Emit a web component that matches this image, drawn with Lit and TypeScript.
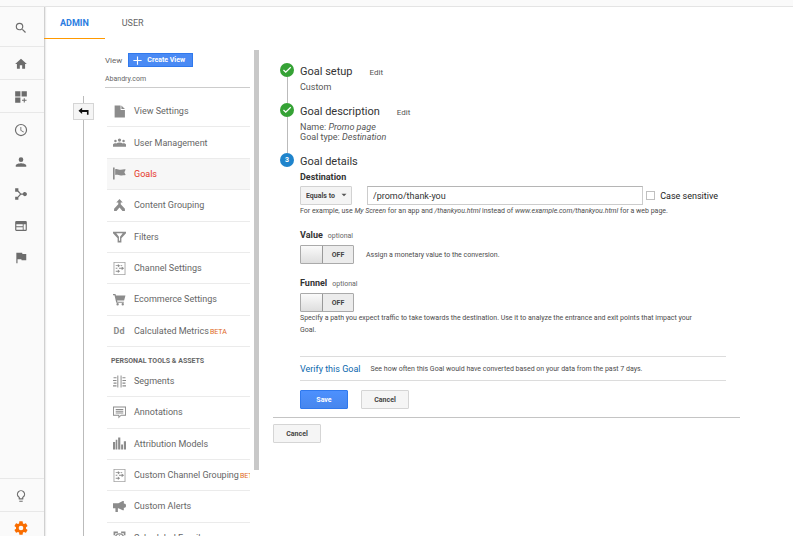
import { LitElement, html, css, svg, nothing } from "lit";
import { customElement, property, state } from "lit/decorators.js";
import { classMap } from "lit/directives/class-map.js";

const icons: Record<string, unknown> = {
  search: svg`<path d="M15.5 14h-.79l-.28-.27A6.47 6.47 0 0 0 16 9.5 6.5 6.5 0 1 0 9.5 16c1.61 0 3.09-.59 4.23-1.57l.27.28v.79l5 4.99L20.49 19zm-6 0A4.5 4.5 0 1 1 9.5 5a4.5 4.5 0 0 1 0 9z"/>`,
  home: svg`<path d="M10 20v-6h4v6h5v-8h3L12 3 2 12h3v8z"/>`,
  dashboard: svg`<path d="M2 2h9v9H2zM13 2h9v9h-9zM2 13h9v9H2zM16.700 14h1.800v2.700h3v1.800h-3v3h-1.800v-3h-3v-1.800h3z"/>`,
  clock: svg`<path d="M12 1.500a10.500 10.500 0 1 0 0 21 10.500 10.500 0 0 0 0-21zm0 19a8.500 8.500 0 1 1 0-17 8.500 8.500 0 0 1 0 17zM12.500 7H11v6l5.250 3.150.75-1.230-4.500-2.670z"/>`,
  person: svg`<path d="M12 12a4 4 0 1 0 0-8 4 4 0 0 0 0 8zm0 2c-2.670 0-9 1.340-9 4v2h18v-2c0-2.660-6.330-4-9-4z"/>`,
  paths: svg`<path d="M2 2h5.500v4.200L12 11h3.200a3.600 3.600 0 1 1 0 2.400H12l-4.500 4.600V22H2v-5.500h4.200l4-4.300-4-4.200H2z"/>`,
  web: svg`<path d="M20 3.500H4a2 2 0 0 0-2 2v13c0 1.100.9 2 2 2h16a2 2 0 0 0 2-2v-13a2 2 0 0 0-2-2zm-5 15H4V14h11zm0-6H4V9h11zm5 6h-3.500V9H20z"/>`,
  flag: svg`<path d="M14.400 5 14 3H4v18h2v-7h6.600l.4 2h8V5z"/>`,
  bulb: svg`<path d="M9 21c0 .55.45 1 1 1h4c.55 0 1-.45 1-1v-1H9zm3-19a7 7 0 0 0-4 12.740V17c0 .55.45 1 1 1h6c.55 0 1-.45 1-1v-2.260A7 7 0 0 0 12 2zm2.850 11.100-.85.6V16h-4v-2.300l-.85-.6a5 5 0 1 1 5.700 0z"/>`,
  gear: svg`<path d="M19.430 12.980c.04-.32.07-.64.07-.98s-.03-.66-.07-.98l2.110-1.650c.19-.15.24-.42.12-.64l-2-3.460c-.12-.22-.39-.3-.61-.22l-2.490 1c-.52-.4-1.080-.73-1.690-.98l-.38-2.650A.49.49 0 0 0 14 2h-4c-.25 0-.46.18-.49.42l-.38 2.650c-.61.25-1.170.59-1.690.98l-2.490-1c-.23-.09-.49 0-.61.22l-2 3.460c-.13.22-.07.49.12.64l2.110 1.650c-.04.32-.07.65-.07.98s.03.66.07.98l-2.110 1.650c-.19.15-.24.42-.12.64l2 3.460c.12.22.39.3.61.22l2.490-1c.52.4 1.080.73 1.690.98l.38 2.650c.03.24.24.42.49.42h4c.25 0 .46-.18.49-.42l.38-2.650c.61-.25 1.170-.59 1.690-.98l2.490 1c.23.09.49 0 .61-.22l2-3.460c.12-.22.07-.49-.12-.64zM12 15.500a3.500 3.500 0 1 1 0-7 3.500 3.500 0 0 1 0 7z"/>`,
  page: svg`<path d="M3 1h11v8h8v14H3z"/><path d="M15.500 1 22 7.500h-6.500z"/>`,
  people: svg`<path d="M12 4.500a3 3 0 1 0 0 6 3 3 0 0 0 0-6zM4.500 7a2.300 2.300 0 1 0 0 4.600 2.300 2.300 0 0 0 0-4.600zm15 0a2.300 2.300 0 1 0 0 4.600 2.300 2.300 0 0 0 0-4.600zM0 20v-4c0-1.500 3-2.800 6-2.300 1.500-1.300 3.500-1.800 6-1.800s4.500.5 6 1.800c3-.5 6 .8 6 2.300v4z"/>`,
  banner: svg`<path d="M0 1h3v22H0zM4 4c4-1.600 7 1.600 10.400 1 3-.5 5.500-1 9-.6L21 9.500l2.400 5.100c-4 .3-6 .9-9 1-3.500 0-6.400-1.800-10.400-.8z"/>`,
  merge: svg`<path d="M12 0l6 6.500h-3.700V9.500L22 18v4h-4.500L12 15.500 6.500 22H2v-4l7.700-8.500v-3H6z"/>`,
  funnel: svg`<path fill-rule="evenodd" d="M0 3h24v2.800L15.500 15v8h-7v-8L0 5.800zm6 3 5 6.500v7.500h2v-7.500L18 6z"/>`,
  channels: svg`<path opacity=".8" fill-rule="evenodd" d="M1 0h22v24H1zm1.600 1.600v20.800h18.800V1.600z"/><path d="M5 5.800h4V3.500L13 6.700 9 10V7.600H5zM14 5.800h3v1.800h-3zM11 10.800h5V8.500l4.500 3.200L16 15v-2.400h-5zM5 10.800h3v1.800H5zM5 16.300h4V14l4 3.200L9 20.500v-2.400H5z"/>`,
  cart: svg`<path d="M0 2h4.500l1 2.500H23L20.500 14H7.500l.7 2H20v2.200H6L2.800 4.200H0zM8.500 18.500a2.200 2.200 0 1 1 0 4.400 2.200 2.200 0 0 1 0-4.400zm9.500 0a2.200 2.200 0 1 1 0 4.400 2.200 2.200 0 0 1 0-4.400z"/>`,
  segments: svg`<path d="M8 1h1.800v22H8zM14 1h1.800v22H14zM1 4h5.500v2H1zM0 9h6.500v2H0zM1 14h5.500v2H1zM0 19h6.500v2H0zM17.500 4H23v2h-5.500zM17.500 9H24v2h-6.500zM17.500 14H23v2h-5.500zM17.500 19H24v2h-6.500z"/>`,
  note: svg`<path fill-rule="evenodd" d="M0 1h24v17h-9l-5 5v-5H0zm1.700 1.700v13.600h10v3l3-3h7.600V2.700zM5 5.500h14v1.800H5zM5 8.700h14v1.800H5zM5 11.900h14v1.800H5z"/>`,
  bars: svg`<path d="M0 9h4v14H0zM5 5h3v18H5zM9.500 1h4v22h-4zM15 14h3.500v9H15zM20 8h4v15h-4z"/>`,
  horn: svg`<path d="M0 6h10l8-4h2v4.500c3 0 4 1.500 4 4s-1 4-4 4V19h-2l-8-4H9v7H4.500v-7H0z"/>`,
  alarm: svg`<path fill-rule="evenodd" d="M1 1h8v3H4v4H1zm14 0h8v7h-3V4h-5zM12 4a9 9 0 1 1 0 18 9 9 0 0 1 0-18zm0 2.500a6.500 6.500 0 1 0 0 13 6.500 6.500 0 0 0 0-13zM11 8h1.800v4.500l3 2-1 1.500-3.800-2.500z"/>`,
  back: svg`<path d="M1 10.500 9 4v4.500h14V19h-3.500v-6H9v4.500z"/>`,
  plus: svg`<path d="M10.500 1h3v9.500H23v3h-9.500V23h-3v-9.500H1v-3h9.500z"/>`,
  check: svg`<path d="M9 15.200 20 4.200l2 2.200L9 19.400l-6.500-6.500 2-2.200z"/>`,
  caret: svg`<path d="M2 7h20L12 17z"/>`,
};

@customElement("ga-icon")
export class GaIcon extends LitElement {
  @property() name = "";
  static styles = css`
    :host { display: inline-flex; flex: none; width: 14px; height: 14px; }
    svg { width: 100%; height: 100%; fill: currentColor; }
  `;
  render() {
    return html`<svg viewBox="0 0 24 24" aria-hidden="true">${icons[this.name]}</svg>`;
  }
}

interface Entry { icon?: string; glyph?: string; label: string; beta?: boolean; }

const viewEntries: Entry[] = [
  { icon: "page", label: "View Settings" },
  { icon: "people", label: "User Management" },
  { icon: "banner", label: "Goals" },
  { icon: "merge", label: "Content Grouping" },
  { icon: "funnel", label: "Filters" },
  { icon: "channels", label: "Channel Settings" },
  { icon: "cart", label: "Ecommerce Settings" },
  { glyph: "Dd", label: "Calculated Metrics", beta: true },
];

const personalEntries: Entry[] = [
  { icon: "segments", label: "Segments" },
  { icon: "note", label: "Annotations" },
  { icon: "bars", label: "Attribution Models" },
  { icon: "channels", label: "Custom Channel Grouping", beta: true },
  { icon: "horn", label: "Custom Alerts" },
  { icon: "alarm", label: "Scheduled Emails" },
];

@customElement("ga-rail")
export class GaRail extends LitElement {
  static styles = css`
    :host {
      display: flex; flex-direction: column; flex: none; box-sizing: border-box;
      width: 45px; background: #fafafa; border-right: 1px solid #d0d0d0;
      box-shadow: 1px 0 1px #eee; color: #6c6c6c;
    }
    a {
      display: flex; align-items: center; justify-content: center; flex: none; box-sizing: border-box;
      height: 32px; padding: 2px 2px 0 0; color: inherit;
    }
    .ruled { height: 33px; border-bottom: 1px solid #e8e8e8; }
    .tall { height: 40px; }
    .foot { margin-top: auto; height: 34px; border-top: 1px solid #e8e8e8; }
    .active { color: #f96d00; height: 24px; align-items: flex-end; }
    .active ga-icon { width: 16px; height: 16px; }
  `;
  render() {
    const link = (name: string, label: string, cls = "") =>
      html`<a href="#${name}" class=${cls} aria-label=${label}><ga-icon name=${name}></ga-icon></a>`;
    return html`
      ${link("search", "Search", "ruled tall")}
      ${link("home", "Home", "ruled")}
      ${link("dashboard", "Customization", "ruled")}
      ${link("clock", "Real-time")}
      ${link("person", "Audience")}
      ${link("paths", "Acquisition")}
      ${link("web", "Behavior")}
      ${link("flag", "Conversions")}
      ${link("bulb", "Discover", "ruled foot")}
      ${link("gear", "Admin", "active")}
    `;
  }
}

@customElement("ga-view-menu")
export class GaViewMenu extends LitElement {
  @property() selected = "Goals";
  static styles = css`
    :host { display: block; color: #666; }
    .head { display: flex; align-items: center; gap: 6px; height: 14px; padding-top: 3px; font-size: 8px; }
    .create {
      display: flex; align-items: center; gap: 5px; height: 14px; width: 65px; padding: 0 4px;
      border: 1px solid #3079ed; background: #4a8af4; color: #fff; font: bold 7px Roboto, sans-serif; white-space: nowrap;
    }
    .create ga-icon { width: 9px; height: 9px; }
    .site { font-size: 7px; line-height: 16px; padding: 4px 0 0; border-bottom: 1px solid #ccc; margin-bottom: 8px; }
    ul { list-style: none; margin: 0 0 0 2px; padding: 0; display: grid; grid-auto-rows: 1fr; }
    .views { height: 251px; }
    .personal { height: 188px; }
    li { overflow: hidden; border-bottom: 1px solid #ebebeb; box-sizing: border-box; min-height: 0; }
    a { display: flex; align-items: center; height: 100%; color: inherit; text-decoration: none; font-size: 9px; white-space: nowrap; padding-left: 5px; }
    .glyph { display: flex; justify-content: center; flex: none; width: 14px; margin-right: 8px; color: #8c8c8c; font-weight: bold; }
    .glyph ga-icon { width: 13px; height: 13px; }
    .on { background: #f7f7f7; }
    .on .label { color: #e53528; }
    .beta { color: #e0661a; font-size: 7px; margin: 2px 0 0 1px; }
    h2 { margin: 0; padding: 9px 0 0 6px; font: bold 7px/10px Roboto, sans-serif; color: #666; text-transform: uppercase; }
  `;
  private list(entries: Entry[], cls: string) {
    return html`<ul class=${cls}>
      ${entries.map((e) => html`<li class=${classMap({ on: e.label === this.selected })}>
        <a href="#">
          <span class="glyph">${e.icon ? html`<ga-icon name=${e.icon}></ga-icon>` : e.glyph}</span>
          <span class="label">${e.label}</span>${e.beta ? html`<span class="beta">BETA</span>` : nothing}
        </a></li>`)}
    </ul>`;
  }
  render() {
    return html`
      <div class="head"><span>View</span><button class="create"><ga-icon name="plus"></ga-icon>Create View</button></div>
      <div class="site">Abandry.com</div>
      ${this.list(viewEntries, "views")}
      <h2>Personal tools &amp; assets</h2>
      ${this.list(personalEntries, "personal")}
    `;
  }
}

@customElement("ga-goal-form")
export class GaGoalForm extends LitElement {
  @state() private destination = "/promo/thank-you";
  static styles = css`
    :host { display: block; color: #555; font-size: 9px; }
    a { text-decoration: none; color: inherit; }
    ol { list-style: none; margin: 0; padding: 0 14px 0 7px; }
    li { display: grid; grid-template-columns: 14px 1fr; column-gap: 6px; }
    .mark { display: flex; flex-direction: column; align-items: center; padding-top: 1px; }
    .dot {
      display: flex; align-items: center; justify-content: center; flex: none;
      width: 14px; height: 14px; border-radius: 50%; background: #35a235; color: #fff; font-size: 7px; font-weight: bold;
    }
    .dot ga-icon { width: 10px; height: 10px; }
    .now { background: #1f84cc; }
    .line { flex: 1; width: 1px; background: #bbb; margin-bottom: -1px; }
    .title { display: flex; align-items: center; gap: 17px; height: 18px; }
    h2 { margin: 0; font-weight: normal; font-size: 11px; color: #333; }
    .title a { font-size: 8px; padding-top: 2px; }
    .sum { line-height: 10px; padding: 2px 0 10px; }
    h3 { margin: 0 0 2px; font: bold 9px/14px Roboto, sans-serif; color: #333; }
    h3 small { font-weight: normal; font-size: 7px; color: #666; margin-left: 5px; }
    .row { display: flex; align-items: center; }
    .pick { position: relative; display: flex; margin-right: 15px; }
    .pick ga-icon { position: absolute; right: 5px; top: 6px; width: 6px; height: 6px; pointer-events: none; }
    select {
      appearance: none; width: 52px; height: 19px; padding: 0 5px; border: 1px solid #d2d2d2; border-radius: 1px; margin: 0;
      background: #f4f4f4; color: #444; font: bold 7px Roboto, sans-serif;
    }
    .text {
      flex: 1; min-width: 0; height: 19px; box-sizing: border-box; padding: 0 5px; margin: 0;
      border: 1px solid #ccc; border-top-color: #b5b5b5; font: 9px Roboto, sans-serif; color: #333; outline: none;
    }
    .box { appearance: none; width: 9px; height: 9px; margin: 0; border: 1px solid #c0c0c0; background: #fff; }
    .case { display: flex; align-items: center; gap: 5px; padding: 0 8px 0 3px; color: #222; }
    .hint { margin: 0; font-size: 7px; line-height: 12px; color: #4c4c4c; }
    .funnel .hint { padding-right: 24px; }
    .toggle {
      display: flex; align-items: center; width: 54px; height: 19px; box-sizing: border-box; margin-right: 12px;
      border: 1px solid #aaa; border-radius: 1px; background: #ececec; color: #444; font-size: 7px; font-weight: bold;
    }
    .toggle input { appearance: none; width: 22px; height: 100%; margin: 0; border-right: 1px solid #999; background: linear-gradient(#fafafa, #dedede); }
    .toggle span { flex: 1; text-align: center; }
    .value { margin-top: 11px; }
    .funnel { margin-top: 12px; }
    .verify { display: flex; align-items: center; gap: 10px; height: 23px; margin-top: 20px; border: solid #dcdcdc; border-width: 1px 0; }
    .verify a { color: #0b68ad; }
    .actions { display: flex; gap: 13px; padding: 9px 0 8px; }
    button { width: 48px; height: 19px; padding: 0; border: 1px solid #d5d5d5; border-radius: 1px; background: #f5f5f5; color: #444; font: bold 7px Roboto, sans-serif; }
    .save { border-color: #3079ed; background: linear-gradient(#4d90fe, #4787ed); color: #fff; }
    .foot { border-top: 1px solid #c4c4c4; padding-top: 6px; }
  `;
  private toggle(id: string) {
    return html`<label class="toggle"><input type="checkbox" role="switch" aria-labelledby=${id} /><span>OFF</span></label>`;
  }
  render() {
    const done = html`<div class="mark"><span class="dot"><ga-icon name="check"></ga-icon></span><span class="line"></span></div>`;
    return html`
      <ol>
        <li>${done}
          <div>
            <div class="title"><h2>Goal setup</h2><a href="#setup">Edit</a></div>
            <div class="sum">Custom</div>
          </div>
        </li>
        <li>${done}
          <div>
            <div class="title"><h2>Goal description</h2><a href="#description">Edit</a></div>
            <div class="sum">Name: <em>Promo page</em><br />Goal type: <em>Destination</em></div>
          </div>
        </li>
        <li>
          <div class="mark"><span class="dot now">3</span></div>
          <div>
            <div class="title"><h2>Goal details</h2></div>
            <h3 id="dest">Destination</h3>
            <div class="row">
              <span class="pick">
                <select aria-label="Match type"><option>Equals to</option><option>Begins with</option><option>Regular expression</option></select>
                <ga-icon name="caret"></ga-icon>
              </span>
              <input class="text" type="text" aria-labelledby="dest" .value=${this.destination}
                @input=${(e: Event) => (this.destination = (e.target as HTMLInputElement).value)} />
              <label class="case"><input class="box" type="checkbox" />Case sensitive</label>
            </div>
            <p class="hint">For example, use <em>My Screen</em> for an app and <em>/thankyou.html</em> instead of <em>www.example.com/thankyou.html</em> for a web page.</p>
            <div class="value">
              <h3 id="value">Value<small>optional</small></h3>
              <div class="row">${this.toggle("value")}<p class="hint">Assign a monetary value to the conversion.</p></div>
            </div>
            <div class="funnel">
              <h3 id="funnel">Funnel<small>optional</small></h3>
              ${this.toggle("funnel")}
              <p class="hint">Specify a path you expect traffic to take towards the destination. Use it to analyze the entrance and exit points that impact your Goal.</p>
            </div>
            <div class="verify"><a href="#verify">Verify this Goal</a><p class="hint">See how often this Goal would have converted based on your data from the past 7 days.</p></div>
            <div class="actions"><button class="save">Save</button><button>Cancel</button></div>
          </div>
        </li>
      </ol>
      <div class="foot"><button>Cancel</button></div>
    `;
  }
}

@customElement("app-root")
export class AppRoot extends LitElement {
  static styles = css`
    :host { display: flex; flex-direction: column; height: 100vh; overflow: hidden; background: #fff; font-family: Roboto, sans-serif; }
    .top { flex: none; height: 6px; background: #fafafa; border-bottom: 1px solid #e4e4e4; }
    .body { display: flex; flex: 1; min-height: 0; }
    .page { flex: 1; min-width: 0; display: flex; flex-direction: column; }
    nav { display: flex; flex: none; gap: 1px; height: 32px; }
    nav a { display: flex; align-items: center; padding: 0 16px; font-size: 9px; color: #666; text-decoration: none; border-bottom: 1px solid transparent; }
    nav .on { color: #2a7de1; font-weight: bold; border-color: #f90; margin-left: -1px; }
    .cols { display: flex; align-items: flex-start; flex: 1; min-height: 0; }
    .tree { align-self: stretch; display: flex; flex-direction: column; align-items: center; width: 21px; margin: 57px 11px 0 28px; }
    .tree::before, .tree::after { content: ""; width: 1px; height: 7px; background: #bbb; }
    .tree::after { flex: 1; }
    .back { display: flex; align-items: center; justify-content: center; width: 21px; height: 17px; padding: 0; border: 1px solid #d5d5d5; background: #f5f5f5; color: #111; flex: none; }
    .back ga-icon { width: 11px; height: 11px; }
    ga-view-menu { width: 145px; flex: none; margin-top: 11px; }
    .thumb { width: 5px; height: 420px; flex: none; background: #c8c8c8; margin: 11px 14px 0 4px; }
    ga-goal-form { flex: 1; min-width: 0; margin: 23px 53px 0 0; }
  `;
  render() {
    return html`
      <div class="top"></div>
      <div class="body">
        <ga-rail></ga-rail>
        <div class="page">
          <nav><a class="on" href="#admin">ADMIN</a><a href="#user">USER</a></nav>
          <div class="cols">
            <div class="tree"><button class="back" aria-label="Collapse column"><ga-icon name="back"></ga-icon></button></div>
            <ga-view-menu></ga-view-menu>
            <div class="thumb"></div>
            <ga-goal-form></ga-goal-form>
          </div>
        </div>
      </div>
    `;
  }
}
